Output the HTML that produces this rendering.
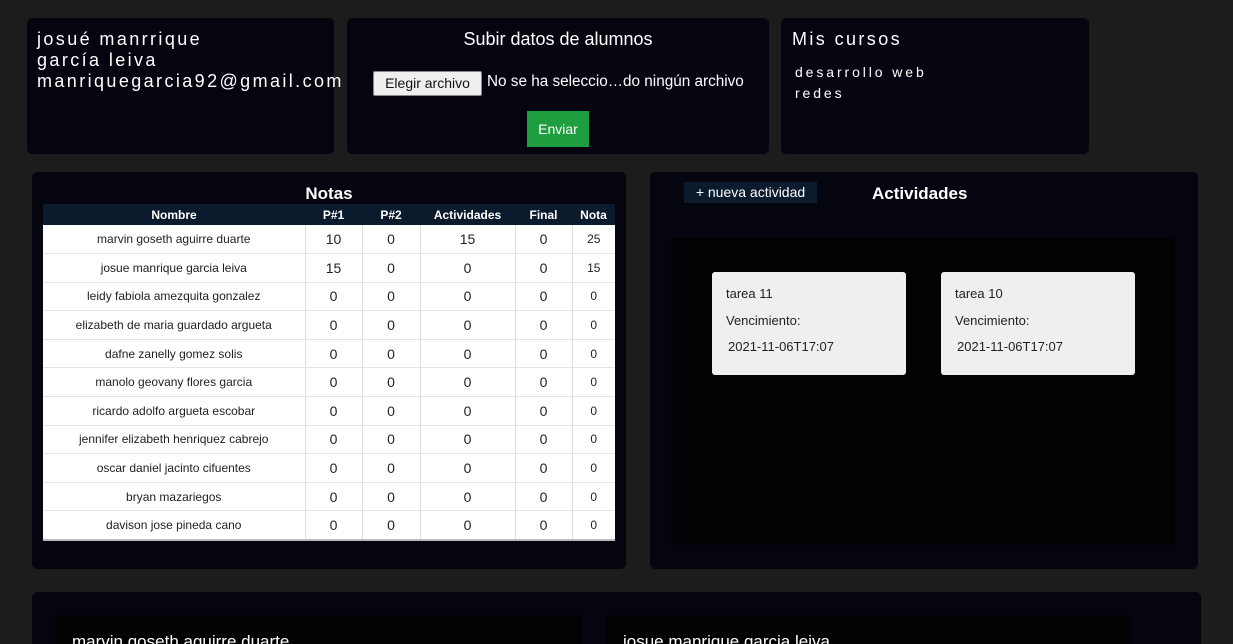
<html><head><style>
html,body{height:644px;overflow:hidden}
body{margin:0;width:1233px;background:#1c1c1c;font-family:"Liberation Sans",sans-serif;position:relative}
.p{position:absolute;background:#05050f;border-radius:5px}
.mono{letter-spacing:2.4px;color:#fff}
table{border-collapse:collapse;position:absolute;left:43px;top:204px;width:572px;font-size:12px}
th{background:#0b1a2d;color:#fff;height:21px;font-size:12px;padding:0}
td{background:#fff;color:#222;text-align:center;height:28.6px;padding:0;border-right:1px solid #ddd;border-bottom:1px solid #e4e4e4;font-size:14px}
td:first-child{font-size:12px}
td:last-child{font-size:12px;border-right:0}
.c{position:absolute;background:#efefef;border-radius:3px;width:194px;height:103px;font-size:13px;color:#222}
.c div{position:absolute;left:14px}
</style></head><body>
<div class="p" style="left:27px;top:18px;width:307px;height:136px"><div class="mono" style="position:absolute;left:10px;top:11px;font-size:18px;line-height:21px;white-space:nowrap">josué manrrique<br>garcía leiva<br>manriquegarcia92@gmail.com</div></div>
<div class="p" style="left:347px;top:18px;width:422px;height:136px">
<div style="position:absolute;left:0;right:0;top:11px;text-align:center;color:#fff;font-size:18px">Subir datos de alumnos</div>
<div style="position:absolute;left:26px;top:53px;width:107px;height:23px;background:#efefef;border:1px solid #888;border-radius:2px;font-size:14px;line-height:23px;text-align:center;color:#111">Elegir archivo</div>
<div style="position:absolute;left:140px;top:55px;color:#fff;font-size:15.3px;white-space:nowrap">No se ha seleccio…do ningún archivo</div>
<div style="position:absolute;left:180px;top:93px;width:62px;height:36px;background:#1e9e3e;color:#fff;font-size:14px;line-height:36px;text-align:center">Enviar</div></div>
<div class="p" style="left:781px;top:18px;width:308px;height:136px"><div class="mono" style="position:absolute;left:11px;top:11px;font-size:18px">Mis cursos</div><div style="position:absolute;left:14px;top:44px;font-size:14px;line-height:21px;letter-spacing:2.9px;color:#fff">desarrollo web<br>redes</div></div>
<div class="p" style="left:32px;top:172px;width:594px;height:397px"><div style="position:absolute;left:0;right:0;top:12px;text-align:center;color:#fff;font-weight:bold;font-size:17px">Notas</div></div>
<table><tr><th style="width:262px">Nombre</th><th style="width:57px">P#1</th><th style="width:58px">P#2</th><th style="width:95px">Actividades</th><th style="width:57px">Final</th><th>Nota</th></tr>
<tr><td>marvin goseth aguirre duarte</td><td>10</td><td>0</td><td>15</td><td>0</td><td>25</td></tr>
<tr><td>josue manrique garcia leiva</td><td>15</td><td>0</td><td>0</td><td>0</td><td>15</td></tr>
<tr><td>leidy fabiola amezquita gonzalez</td><td>0</td><td>0</td><td>0</td><td>0</td><td>0</td></tr>
<tr><td>elizabeth de maria guardado argueta</td><td>0</td><td>0</td><td>0</td><td>0</td><td>0</td></tr>
<tr><td>dafne zanelly gomez solis</td><td>0</td><td>0</td><td>0</td><td>0</td><td>0</td></tr>
<tr><td>manolo geovany flores garcia</td><td>0</td><td>0</td><td>0</td><td>0</td><td>0</td></tr>
<tr><td>ricardo adolfo argueta escobar</td><td>0</td><td>0</td><td>0</td><td>0</td><td>0</td></tr>
<tr><td>jennifer elizabeth henriquez cabrejo</td><td>0</td><td>0</td><td>0</td><td>0</td><td>0</td></tr>
<tr><td>oscar daniel jacinto cifuentes</td><td>0</td><td>0</td><td>0</td><td>0</td><td>0</td></tr>
<tr><td>bryan mazariegos</td><td>0</td><td>0</td><td>0</td><td>0</td><td>0</td></tr>
<tr><td style="border-bottom:2px solid #bbb">davison jose pineda cano</td><td style="border-bottom:2px solid #bbb">0</td><td style="border-bottom:2px solid #bbb">0</td><td style="border-bottom:2px solid #bbb">0</td><td style="border-bottom:2px solid #bbb">0</td><td style="border-bottom:2px solid #bbb">0</td></tr></table>
<div class="p" style="left:650px;top:172px;width:548px;height:397px">
<div style="position:absolute;left:34px;top:10px;width:133px;height:21px;background:#0b1a2d;color:#fff;font-size:14px;line-height:21px;text-align:center">+ nueva actividad</div>
<div style="position:absolute;left:222px;top:12px;color:#fff;font-weight:bold;font-size:17px">Actividades</div>
<div style="position:absolute;left:21px;top:66px;width:504px;height:307px;background:#020204"></div></div>
<div class="c" style="left:712px;top:272px"><div style="top:14px">tarea 11</div><div style="top:41px">Vencimiento:</div><div style="top:67px;left:16px">2021-11-06T17:07</div></div>
<div class="c" style="left:941px;top:272px"><div style="top:14px">tarea 10</div><div style="top:41px">Vencimiento:</div><div style="top:67px;left:16px">2021-11-06T17:07</div></div>
<div class="p" style="left:32px;top:592px;width:1169px;height:80px">
<div style="position:absolute;left:23px;top:23px;width:527px;height:60px;background:#030306"><div style="position:absolute;left:17px;top:17px;color:#fff;font-size:17px">marvin goseth aguirre duarte</div></div>
<div style="position:absolute;left:574px;top:23px;width:526px;height:60px;background:#030306"><div style="position:absolute;left:17px;top:17px;color:#fff;font-size:17px">josue manrique garcia leiva</div></div></div>
</body></html>
